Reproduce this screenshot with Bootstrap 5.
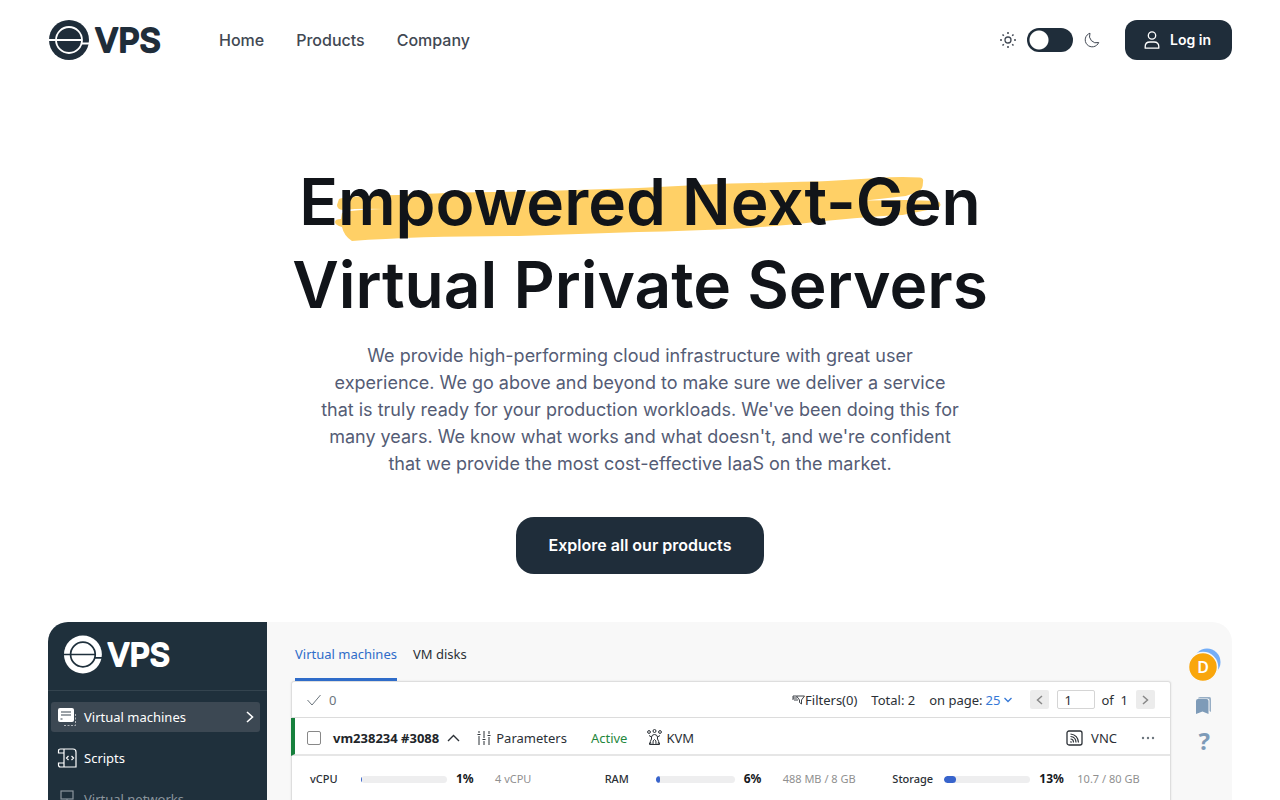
<!DOCTYPE html>
<html lang="en">
<head>
<meta charset="utf-8">
<meta name="viewport" content="width=device-width, initial-scale=1">
<title>VPS – Virtual Private Servers</title>
<link href="https://cdn.jsdelivr.net/npm/bootstrap@5.3.0/dist/css/bootstrap.min.css" rel="stylesheet">
<style>
  :root { --ink: #1f2d3a; --panel: #1f303c; }
  body { font-family: Inter, "Liberation Sans", sans-serif; color: #414853; }
  svg { display: block; flex: none; fill: none; stroke: currentColor; }
  .site-head { padding: 20px 48px; }
  .brand { color: var(--ink); margin-right: 56px; }
  .brand-mark { width: 115px; height: 40px; }
  .brand-word { font-family: Inter, sans-serif; font-weight: 500; font-size: 33px; fill: currentColor; stroke: currentColor; stroke-width: 2px; stroke-linejoin: round; }
  .main-links { gap: 32px; }
  .main-links a { color: #414853; font-size: 16px; font-weight: 500; }
  .theme-box { gap: 11px; margin-right: 25px; }
  .theme-box .form-check-input {
    width: 46px; height: 24px; margin: 0; border: 0; border-radius: 12px;
    background: var(--ink) radial-gradient(circle at 12px 12px, #fff 9px, transparent 10px);
  }
  .btn-ink, .btn-ink:hover { background: var(--ink); color: #fff; font-weight: 600; }
  .btn-login { height: 40px; padding: 0 21px 1px 19px; gap: 10px; border-radius: 12px; font-size: 14px; border: 0; }
  .btn-explore { height: 57px; padding: 0 32px 2px; border-radius: 18px; font-size: 16px; border: 0; min-width: 248px; }
  .hero { padding: 80px 16px 48px; }
  .hero h1 { font-size: 64px; line-height: 83px; font-weight: 600; color: #111419; margin-bottom: 16px; }
  .marked { position: relative; display: inline-block; z-index: 0; }
  .marked svg { position: absolute; z-index: -1; left: 36px; top: 14px; width: 89%; height: 68px; }
  .lede { max-width: 646px; font-size: 18px; line-height: 27px; color: #545c75; margin-bottom: 40px; }
  .preview { margin: 0 48px; border-radius: 20px 20px 0 0; background: #f8f8f8; font-family: "Noto Sans", "Open Sans", sans-serif; font-size: 13px; line-height: 18px; color: #2b3036; }
  .preview a { color: inherit; }
  .side { width: 219px; background: var(--panel); color: #fff; flex: none; }
  .side-brand { height: 69px; padding: 13px 15px; border-bottom: 1px solid #34444f; }
  .side-brand svg { width: 109px; height: 39px; }
  .side nav { padding: 11px 7px 0 3px; gap: 11px; }
  .side nav a { height: 30px; padding: 0 6px; gap: 7px; border-radius: 3px; }
  .side nav a.active { background: #3c4853; }
  .side nav a.muted { color: #8c969e; }
  .board { padding: 0 0 0 24px; min-width: 0; }
  .tabs { height: 59px; padding-left: 4px; gap: 16px; }
  .tabs a { padding-top: 23px; border-bottom: 3px solid transparent; }
  .tabs a.active { color: #2f6cc9; border-color: #2f6cc9; }
  .vm-box { background: #fff; border: 1px solid #dedede; box-shadow: 0 0 2px #ddd; border-radius: 3px 3px 0 0; }
  .bar-row { height: 36px; border-bottom: 1px solid #dcdcdc; padding: 0 15px; }
  .vm-row { height: 38px; border-bottom: 2px solid #e6e6e6; border-left: 4px solid #17803d; padding: 3px 15px 0 11px; margin-left: -1px; }
  .vm-row .form-check-input { width: 14px; height: 14px; margin: 0 12px 0 1px; border: 1px solid #888; border-radius: 2px; }
  .gap-status { margin-right: 24px; }
  .gap-bar { margin-right: 14px; }
  .per-page { font: inherit; color: #3578d6; margin: 0 18px 0 3px; }
  .btn-page { width: 19px; height: 19px; padding: 0; border: 0; border-radius: 2px; background: #ececec; color: #888; }
  .page-no { width: 38px; height: 19px; margin-right: 6px; padding: 0 6px; border: 1px solid #d5d5d5; border-radius: 2px; font-size: 13px; color: #2b3036; }
  .stats { display: grid; grid-template-columns: 295fr 288fr 296fr; height: 46px; font-size: 11px; }
  .stat { display: grid; grid-template-columns: 51px 86px 48px 1fr; align-items: center; padding-left: 18px; font-weight: 500; }
  .stat .progress { height: 7px; background: #eeeeef; --bs-progress-bar-bg: #3864cc; }
  .stat .progress-bar { border-radius: 4px; }
  .stat strong { font-size: 12px; padding-left: 9px; color: #15181c; }
  .stat small { font-size: 11px; color: #909090; font-weight: 400; }
  .stat-ram { grid-template-columns: 51px 79px 48px 1fr; }
  .stat-disk { grid-template-columns: 52px 86px 47px 1fr; }
  .rail { width: 61px; padding: 26px 10px 0 0; gap: 13px; color: #7e9bb8; }
</style>
</head>
<body class="bg-white vh-100 overflow-hidden d-flex flex-column">

<header class="site-head d-flex align-items-center">
  <a class="brand" href="#" aria-label="VPS home">
    <svg class="brand-mark" viewBox="0 0 115 40">
      <circle cx="21" cy="20" r="20" fill="currentColor" stroke="none"/>
      <g stroke="#fff" stroke-width="1.800"><circle cx="21" cy="20" r="13"/><path d="M0 20H34M33 23.500H42"/></g>
      <text class="brand-word" x="47" y="32">VPS</text>
    </svg>
  </a>
  <nav class="main-links d-flex">
    <a class="text-decoration-none" href="#">Home</a>
    <a class="text-decoration-none" href="#">Products</a>
    <a class="text-decoration-none" href="#">Company</a>
  </nav>
  <div class="theme-box d-flex align-items-center ms-auto">
    <svg width="16" height="16" viewBox="0 0 16 16" stroke-width="1.300"><circle cx="8" cy="8" r="3"/><path stroke-width="1.500" d="M8 0v2M8 14v2M0 8h2M14 8h2M2.500 2.500l1.300 1.300M12.200 12.200l1.300 1.300M2.500 13.500l1.300-1.300M12.200 3.800l1.300-1.300"/></svg>
    <input class="form-check-input" type="checkbox" role="switch" aria-label="Dark theme">
    <svg width="16" height="16" viewBox="0 0 16 16" stroke-width="1"><path stroke-linejoin="round" d="M6 1.200A7 7 0 1 0 14.700 10.500A7 7 0 0 1 6 1.200Z"/></svg>
  </div>
  <button type="button" class="btn btn-ink btn-login d-flex align-items-center">
    <svg width="16" height="18" viewBox="0 0 16 18" stroke-width="1.300"><circle cx="8" cy="4.500" r="3.700"/><path stroke-linejoin="round" d="M1.200 17.200V15.500Q1.200 11 6 11H10Q14.800 11 14.800 15.500V17.200Z"/></svg>
    Log in
  </button>
</header>

<main class="flex-grow-1 d-flex flex-column">
  <section class="hero text-center">
    <h1><span class="marked">Empowered Next-Gen
      <svg viewBox="336 174 608 68" preserveAspectRatio="none" aria-hidden="true"><path stroke="none" fill="#ffd066" d="M340 199Q346 196 400 195Q450 192 530 191.500L640 188L720 184Q800 182 830 181L880 178Q900 176.500 922 177.500Q926 178 925.500 181L925 186Q924 190 920 192L908 196L868 200.500L908 200L940 201Q944 203 942.500 206Q941 210 930 210L905 215Q860 217 800 224L750 228Q690 231 640 232L520 236Q420 236 353 241Q345 236 343 227Q336 225 336 222Q336 219 342 219L343 213Q350 210 384 209Q360 208 345 210Q338 210 338 205Z"/></svg>
    </span><br>Virtual Private Servers</h1>
    <p class="lede mx-auto">We provide high-performing cloud infrastructure with great user experience. We go above and beyond to make sure we deliver a service that is truly ready for your production workloads. We've been doing this for many years. We know what works and what doesn't, and we're confident that we provide the most cost-effective IaaS on the market.</p>
    <button type="button" class="btn btn-ink btn-explore">Explore all our products</button>
  </section>

  <section class="preview d-flex flex-grow-1 overflow-hidden" aria-label="Control panel preview">
    <aside class="side">
      <div class="side-brand">
        <svg viewBox="0 0 115 40">
          <circle cx="21" cy="20" r="20" fill="currentColor" stroke="none"/>
          <g stroke="#1f303c" stroke-width="1.800"><circle cx="21" cy="20" r="13"/><path d="M0 20H34M33 23.500H42"/></g>
          <text class="brand-word" x="47" y="32">VPS</text>
        </svg>
      </div>
      <nav class="d-flex flex-column">
        <a class="active d-flex align-items-center text-decoration-none" href="#">
          <svg width="20" height="20" viewBox="0 0 20 20"><path d="M7 18.500H18.500V6" stroke-dasharray="2 1.500" opacity=".6"/><rect x="1" y="1" width="16" height="14" rx="2" fill="#fff" stroke="none"/><path d="M4 5H14M4 8H14M3.500 12H5.500" stroke="#3c4853" stroke-width="1.200"/></svg>
          <span class="flex-grow-1">Virtual machines</span>
          <svg width="8" height="12" viewBox="0 0 8 12" stroke-width="1.600"><path d="M1 1L6.500 6L1 11"/></svg>
        </a>
        <a class="d-flex align-items-center text-decoration-none" href="#">
          <svg width="20" height="20" viewBox="0 0 20 20" stroke-width="1.200"><path d="M7 5H1.500V3Q1.500 1 3.500 1H16Q19 1 19 4V19H3.500Q1.500 19 1.500 17V15H7M7 1V19M11.500 8L9.500 10L11.500 12M14.500 8L16.500 10L14.500 12"/></svg>
          Scripts
        </a>
        <a class="muted d-flex align-items-center text-decoration-none" href="#">
          <svg width="20" height="20" viewBox="0 0 20 20" stroke-width="1.200"><rect x="4" y="2" width="12" height="8"/><path d="M10 10V14M3 17H17M10 14V17"/></svg>
          Virtual networks
        </a>
      </nav>
    </aside>

    <div class="board flex-grow-1">
      <nav class="tabs d-flex">
        <a class="active text-decoration-none" href="#">Virtual machines</a>
        <a class="text-decoration-none" href="#">VM disks</a>
      </nav>
      <div class="vm-box">
        <div class="bar-row d-flex align-items-center">
          <svg class="me-2 text-secondary" width="14" height="12" viewBox="0 0 14 12"><path d="M.5 6L5 11L13.500 1"/></svg>
          <span class="text-secondary">0</span>
          <a class="ms-auto gap-bar d-flex align-items-center text-decoration-none" href="#"><svg width="13" height="10" viewBox="0 0 13 10"><path stroke-width=".9" d="M4.500 1H12.500L9.500 5V9L7.500 7.500V5ZM1 1H4.500M1 3H5M2 5H6M1 1V5"/></svg>Filters(0)</a>
          <span class="gap-bar">Total: 2</span>
          <label for="pagesize">on page:</label>
          <button id="pagesize" type="button" class="btn per-page p-0 border-0 d-flex align-items-center gap-1">25 <svg width="8" height="6" viewBox="0 0 8 6" stroke-width="1.300"><path d="M.5 1L4 4.500L7.500 1"/></svg></button>
          <button type="button" class="btn btn-page d-flex align-items-center justify-content-center me-2" aria-label="Previous page"><svg width="7" height="10" viewBox="0 0 7 10" stroke-width="1.500"><path d="M6 1L1.500 5L6 9"/></svg></button>
          <input class="page-no" type="text" value="1" aria-label="Page number">
          <span class="me-2">of&nbsp; 1</span>
          <button type="button" class="btn btn-page d-flex align-items-center justify-content-center" aria-label="Next page"><svg width="7" height="10" viewBox="0 0 7 10" stroke-width="1.500"><path d="M1 1L5.500 5L1 9"/></svg></button>
        </div>
        <div class="vm-row d-flex align-items-center">
          <input class="form-check-input" type="checkbox" id="vm1">
          <label class="fw-bold text-dark me-2" for="vm1">vm238234 #3088</label>
          <svg class="me-3" width="13" height="8" viewBox="0 0 13 8" stroke-width="1.400"><path d="M1 7L6.500 1.500L12 7"/></svg>
          <svg class="me-1" width="16" height="14" viewBox="0 0 16 14"><path d="M3 0V2M3 5V14M8 0V7M8 10V14M13 0V3M13 6V14M1.500 3.500H4.500M6.500 8.500H9.500M11.500 4.500H14.500"/></svg>
          <span class="gap-status">Parameters</span>
          <span class="me-3" style="color:#1f873d">Active</span>
          <svg class="me-1 ms-1" width="15" height="17" viewBox="0 0 15 17"><circle cx="2" cy="3" r="1.400"/><circle cx="7.500" cy="2" r="1.500"/><circle cx="13" cy="3" r="1.400"/><path d="M2 6.500L4.500 8M13 6.500L10.500 8M4.500 8Q5 5.500 7.500 5.500T10.500 8V10Q12.500 12 11 15.500H4Q2.500 12 4.500 10ZM4 15.500H2.500V13.500M11 15.500H12.500V13.500M6 15Q5.500 11 7.500 10.500Q9.500 11 9 15"/></svg>
          <span>KVM</span>
          <svg class="ms-auto me-1" width="17" height="16" viewBox="0 0 17 16"><rect x="1" y="1" width="15" height="14" rx="2" stroke-width="1.300"/><path stroke-width="1.200" d="M4.500 4Q12 5 12.500 12.500M4.500 6.500Q10 7 10 12.500M4.500 9Q7.500 9 7.500 12.500M4.500 11.500L5.500 12.500"/></svg>
          <span class="ms-1 gap-status">VNC</span>
          <svg class="text-secondary" width="14" height="4" viewBox="0 0 14 4"><g stroke="none" fill="currentColor"><circle cx="2" cy="2" r="1.200"/><circle cx="7" cy="2" r="1.200"/><circle cx="12" cy="2" r="1.200"/></g></svg>
        </div>
        <div class="stats">
          <div class="stat"><span>vCPU</span><div class="progress"><div class="progress-bar" style="width:1%"></div></div><strong>1%</strong><small>4 vCPU</small></div>
          <div class="stat stat-ram"><span>RAM</span><div class="progress"><div class="progress-bar" style="width:6%"></div></div><strong>6%</strong><small>488 MB / 8 GB</small></div>
          <div class="stat stat-disk"><span>Storage</span><div class="progress"><div class="progress-bar" style="width:13%"></div></div><strong>13%</strong><small>10.7 / 80 GB</small></div>
        </div>
      </div>
    </div>

    <div class="rail d-flex flex-column align-items-end">
      <svg width="34" height="35" viewBox="0 0 34 35"><circle cx="19" cy="14" r="13.500" fill="#74aef8" stroke="none"/><circle cx="15" cy="19" r="14.500" fill="#f9a60c" stroke="#f8f8f8" stroke-width="1.500"/><text x="15" y="25" text-anchor="middle" font-family="Noto Sans, sans-serif" font-size="16" font-weight="600" fill="#fff" stroke="none">D</text></svg>
      <svg class="me-2" width="20" height="20" viewBox="0 0 20 20"><g stroke="none" fill="#7e9bb8"><path opacity=".8" d="M4 2.500Q4 1 6 1H15.500Q17 1 17 3V16L15.500 15V4.500Q15.500 2.500 13.500 2.500Z"/><path d="M2 5Q2 3 4 3H12.500Q14.500 3 14.500 5V18L8.500 15.500L2 18Z"/></g></svg>
      <span class="fw-bold fs-4 me-2 lh-1 px-1">?</span>
    </div>
  </section>
</main>
<script src="https://cdn.jsdelivr.net/npm/bootstrap@5.3.0/dist/js/bootstrap.bundle.min.js"></script>
</body>
</html>
